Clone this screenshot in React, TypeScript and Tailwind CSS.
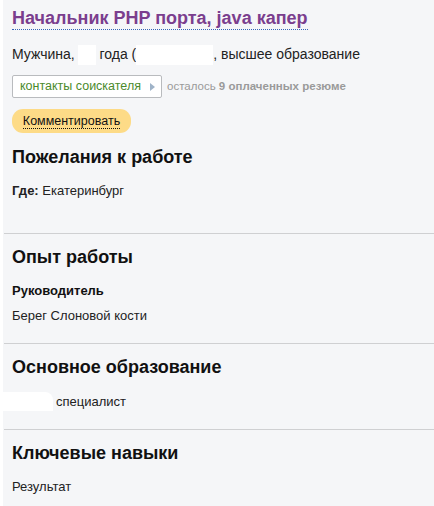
import React from "react";

const font = { fontFamily: '"Liberation Sans", Arial, sans-serif' };

function Divider() {
  return <div className="ml-[1px] h-px bg-[#cfd0d2]" />;
}

function Heading({ children }: { children: React.ReactNode }) {
  return <h2 className="text-[18px] leading-[22px] font-bold text-[#111]">{children}</h2>;
}

export default function App() {
  return (
    <div className="w-[434px] h-[506px] overflow-hidden bg-white" style={font}>
      <div className="ml-[3px] h-full bg-[#f5f6f8] text-[#222]">
        {/* Header */}
        <div className="pl-[9px] pt-[7px]">
          <div>
            <span className="inline-block text-[18px] leading-[22px] font-bold text-[#7b3e8e] border-b border-dotted border-[#3565b8]">
              Начальник PHP порта, java капер
            </span>
          </div>
          <div className="mt-[14px] text-[14px] leading-[18px] text-[#222] whitespace-nowrap">
            Мужчина,{" "}
            <span className="inline-block w-[18px] h-[20px] bg-white align-middle -ml-[1px]" />
            {" "}года (
            <span className="inline-block w-[77px] h-[20px] bg-white align-middle" />
            , высшее образование
          </div>
          <div className="mt-[10px] flex items-center gap-[5px]">
            <button className="h-[23px] w-[150px] flex items-center justify-between pl-[7px] pr-[6px] bg-white border border-[#b9bbbe] rounded-[2px] text-[12.5px] text-[#4b8a2c]">
              <span>контакты соискателя</span>
              <svg width="5" height="8" viewBox="0 0 5 8">
                <path d="M0 0 L5 4 L0 8 Z" fill="#9fb3c8" />
              </svg>
            </button>
            <span className="text-[11.5px] text-[#9a9a9a]">
              осталось <b>9 оплаченных резюме</b>
            </span>
          </div>
          <div className="mt-[11px] flex">
            <button className="h-[24px] w-[119px] rounded-[11px] bg-[#fddb87] text-[12.5px] text-[#111]">
              <span className="border-b border-dotted border-[#111] leading-[14px] inline-block">Комментировать</span>
            </button>
          </div>
        </div>

        {/* Пожелания */}
        <div className="pl-[9px] mt-[13px]">
          <Heading>Пожелания к работе</Heading>
          <div className="mt-[14px] text-[13px] leading-[18px]">
            <b>Где:</b> Екатеринбург
          </div>
        </div>
        <div className="mt-[33px]">
          <Divider />
        </div>

        {/* Опыт */}
        <div className="pl-[9px] mt-[12px]">
          <Heading>Опыт работы</Heading>
          <div className="mt-[14px] text-[13px] leading-[18px] font-bold text-[#111]">Руководитель</div>
          <div className="mt-[7px] text-[13px] leading-[18px]">Берег Слоновой кости</div>
        </div>
        <div className="mt-[18px]">
          <Divider />
        </div>

        {/* Образование */}
        <div className="pl-[9px] mt-[12px]">
          <Heading>Основное образование</Heading>
          <div className="mt-[14px] text-[13px] leading-[18px] flex items-center -ml-[12px]">
            <span className="inline-block w-[53px] h-[19px] bg-white rounded-tr-[8px]" />
            <span className="ml-[3px]">специалист</span>
          </div>
        </div>
        <div className="mt-[18px]">
          <Divider />
        </div>

        {/* Навыки */}
        <div className="pl-[9px] mt-[12px]">
          <Heading>Ключевые навыки</Heading>
          <div className="mt-[14px] text-[13px] leading-[18px]">Результат</div>
        </div>
      </div>
    </div>
  );
}
